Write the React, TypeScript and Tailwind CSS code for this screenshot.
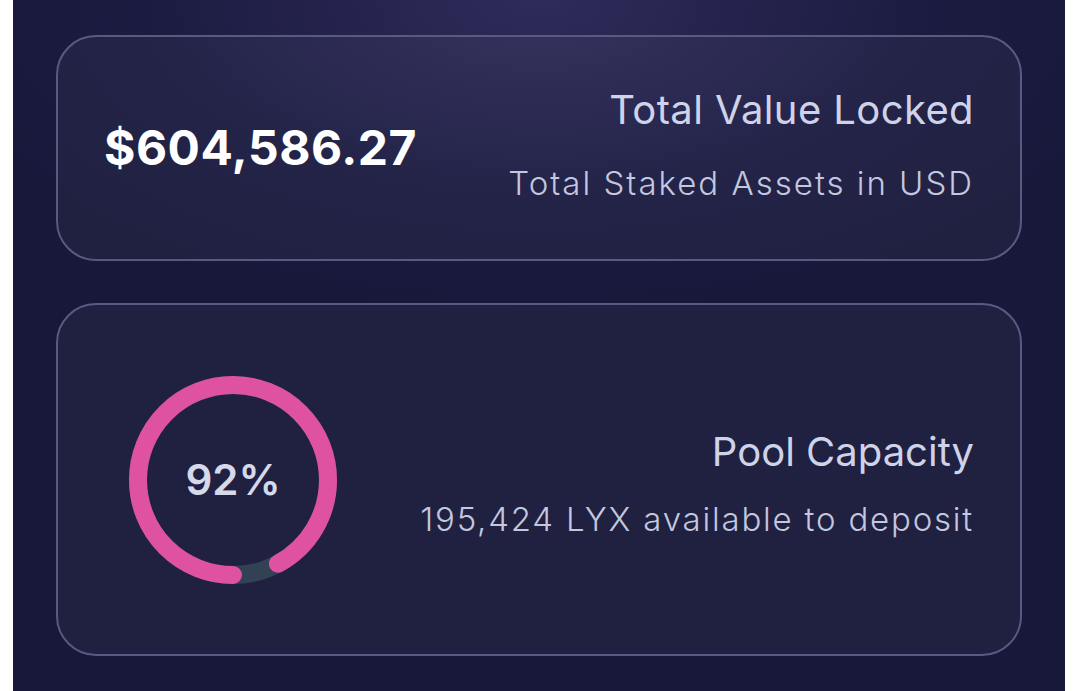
import React from 'react';

const font = { fontFamily: 'Inter, "Noto Sans", sans-serif' };

const CapacityRing: React.FC<{ percent: number }> = ({ percent }) => {
    const r = 95;
    const c = 2 * Math.PI * r;
    return (
        <div className="relative w-[208px] h-[208px] shrink-0">
            <svg width="208" height="208" viewBox="0 0 208 208">
                <circle cx="104" cy="104" r={r} fill="none" stroke="#334155" strokeWidth="18" />
                <circle
                    cx="104"
                    cy="104"
                    r={r}
                    fill="none"
                    stroke="#df52a2"
                    strokeWidth="18"
                    strokeLinecap="round"
                    strokeDasharray={`${(c * percent) / 100} ${c}`}
                    transform="rotate(90 104 104)"
                />
            </svg>
            <div className="absolute inset-0 flex items-center justify-center text-[42px] font-semibold text-[#d6d9ea]">
                {percent}%
            </div>
        </div>
    );
};

export default function App() {
    return (
        <div className="w-full h-[691px] bg-white flex justify-center" style={font}>
            <div className="w-[1052px] h-full bg-[radial-gradient(ellipse_60%_45%_at_50%_0%,#2f2b5a_0%,#1c1c42_60%,#17183a_100%)] px-[43px] pt-[35px] pb-[35px] flex flex-col gap-[42px]">
                {/* TVL card */}
                <section className="h-[226px] rounded-[40px] border-2 border-[#575b82] bg-white/[0.04] flex items-center justify-between pl-[46px] pr-[46px]">
                    <div className="text-[48px] font-bold text-white tracking-[0.5px] leading-none">$604,586.27</div>
                    <div className="flex flex-col items-end text-right pb-[7px]">
                        <h2 className="text-[40px] font-normal text-[#cfd3ea] tracking-[0.4px] leading-[48px]">Total Value Locked</h2>
                        <p className="text-[33px] font-light text-[#c3c7df] tracking-[2px] leading-[40px] mt-[29px]">Total Staked Assets in USD</p>
                    </div>
                </section>

                {/* Pool capacity card */}
                <section className="flex-1 rounded-[40px] border-2 border-[#575b82] bg-white/[0.04] flex items-center justify-between pl-[71px] pr-[46px]">
                    <CapacityRing percent={92} />
                    <div className="flex flex-col items-end text-right pt-[7px]">
                        <h2 className="text-[40px] font-normal text-[#cfd3ea] leading-[48px]">Pool Capacity</h2>
                        <p className="text-[33px] font-light text-[#c3c7df] tracking-[1.8px] leading-[40px] mt-[23px]">195,424 LYX available to deposit</p>
                    </div>
                </section>
            </div>
        </div>
    );
}
